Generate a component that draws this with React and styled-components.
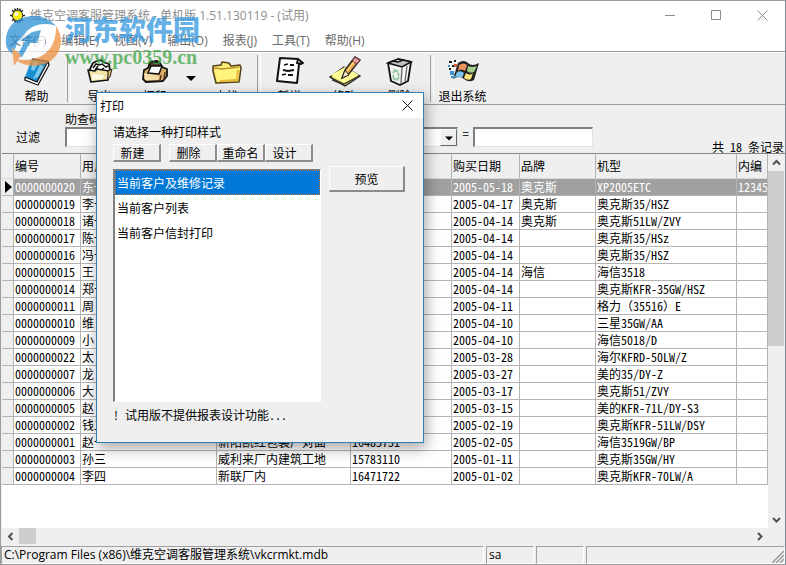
import React from 'react'
import styled, { createGlobalStyle } from 'styled-components'

const GlobalStyle = createGlobalStyle`
    * {
        box-sizing: border-box;
    }
    body {
        margin: 0;
        background: #efefef;
        font-family: "Noto Sans CJK SC", sans-serif;
        font-size: 12px;
        line-height: 16px;
        color: #000;
    }
    button, input, select {
        font: inherit;
        color: inherit;
        border-radius: 0;
        margin: 0;
        padding: 0;
    }
`;

const Window = styled.div`
    position: relative;
    display: flex;
    flex-direction: column;
    min-height: 100vh;
    overflow: hidden;
    background: #efefef;
    border: 1px solid #9c9c9c;
    border-right-color: #7d8b98;
`;

const TitleBar = styled.header`
    display: flex;
    align-items: center;
    height: 28px;
    padding-left: 8px;
    background: #fff;
    color: #8e8e8e;
    font-family: "Open Sans", "Noto Sans CJK SC", sans-serif;
`;

const Title = styled.h1`
    flex: 1;
    margin: 2px 0 0 4px;
    font-size: 12px;
    font-weight: normal;
    white-space: nowrap;
`;

const WindowButton = styled.button`
    display: flex;
    align-items: center;
    justify-content: center;
    width: 46px;
    height: 28px;
    border: 0;
    background: none;
`;

const MenuBar = styled.nav`
    display: flex;
    gap: 15px;
    height: 22px;
    padding: 4px 8px 0;
    background: #fff;
    font-family: "Open Sans", "Noto Sans CJK SC", sans-serif;
`;

const MenuLink = styled.a`
    color: #6a6a6a;
    text-decoration: none;
    white-space: nowrap;
`;

const Toolbar = styled.div`
    display: flex;
    height: 54px;
    padding-left: 8px;
    border-top: 1px solid #9a9a9a;
    border-bottom: 1px solid #9a9a9a;
    box-shadow: inset 0 1px #fff;
`;

const ToolButton = styled.button`
    display: flex;
    flex-direction: column;
    align-items: center;
    width: 55px;
    padding-top: 4px;
    border: 0;
    background: none;
    white-space: nowrap;

    svg {
        flex: none;
    }
`;

const ArrowButton = styled.button`
    width: 17px;
    border: 0;
    background: none;
`;

const Separator = styled.div`
    width: 8px;
    padding: 3px 0 2px 3px;

    &::before {
        content: "";
        display: block;
        width: 2px;
        height: 100%;
        border-left: 1px solid #a0a0a0;
        border-right: 1px solid #fff;
    }
`;

const FilterBar = styled.form`
    display: flex;
    align-items: flex-end;
    height: 48px;
    padding: 0 1px 6px 15px;
`;

const FilterTitle = styled.div`
    width: 49px;
    line-height: 20px;
`;

const Field = styled.div`
    display: flex;
    flex-direction: column;
    width: 140px;
    margin-right: 110px;
`;

const TextInput = styled.input`
    width: ${({ $width }) => $width};
    height: 20px;
    padding: 0 3px;
    background: #fff;
    border: 1px solid #e3e3e3;
    border-top: 2px solid #808080;
    border-left: 2px solid #808080;
    outline: 0;
`;

const Combo = styled.div`
    display: flex;
    align-items: stretch;
    width: 143px;
    height: 20px;
    background: #fff;
    border: 1px solid #e3e3e3;
    border-top: 2px solid #808080;
    border-left: 2px solid #808080;
`;

const Select = styled.select`
    flex: 1;
    appearance: none;
    border: 0;
    background: none;
    outline: 0;
`;

const ComboArrow = styled.span`
    display: flex;
    align-items: center;
    justify-content: center;
    width: 17px;
    background: #efefef;
    border: 1px solid #fff;
    border-right-color: #696969;
    border-bottom-color: #696969;
`;

const Equals = styled.span`
    width: 15px;
    line-height: 28px;
    text-align: center;
`;

const Count = styled.output`
    margin: 0 0 -8px auto;
    white-space: nowrap;
    font-feature-settings: "hwid";
`;

const GridArea = styled.section`
    flex: 1;
    display: grid;
    grid-template-columns: minmax(0, 1fr) 17px;
    grid-template-rows: minmax(374px, 1fr) 16px;
    margin-left: 1px;
    border-top: 1px solid #868686;
`;

const TableBox = styled.div`
    background: #fff;
    overflow: hidden;
`;

const Table = styled.table`
    width: 100%;
    table-layout: fixed;
    border-collapse: separate;
    border-spacing: 0;
    font-feature-settings: "hwid";
`;

const Head = styled.th`
    height: 25px;
    padding: 0 0 0 1px;
    background: #efefef;
    border-right: 1px solid #b4b4b4;
    border-bottom: 1px solid #d8d8d8;
    font-weight: normal;
    text-align: left;
    white-space: nowrap;
    overflow: hidden;
`;

const Cell = styled.td`
    height: 17px;
    padding: 0 0 0 1px;
    background: ${({ $selected }) => ($selected ? "#a0a0a0" : "#fff")};
    color: ${({ $selected }) => ($selected ? "#fff" : "#000")};
    border-right: 1px solid #b4b4b4;
    border-bottom: 1px solid #b4b4b4;
    line-height: 16px;
    white-space: nowrap;
    overflow: hidden;
`;

// brackets that keep their full width inside the half-width table text
const Wide = styled.span`
    font-feature-settings: normal;
`;

const Marker = styled(Cell)`
    padding: 0 0 0 3px;
    background: #efefef;

    svg {
        display: block;
    }
`;

const VScroll = styled.div`
    grid-row: span 2;
    display: flex;
    flex-direction: column;
    margin-right: 1px;
`;

const HScroll = styled.div`
    display: flex;
`;

const ScrollButton = styled.button`
    display: flex;
    align-items: center;
    justify-content: center;
    width: ${({ $across }) => ($across ? "17px" : "100%")};
    height: ${({ $across }) => ($across ? "16px" : "17px")};
    border: 0;
    background: #efefef;
`;

const Thumb = styled.div`
    width: ${({ $across }) => ($across ? "17px" : "auto")};
    height: ${({ $across }) => ($across ? "16px" : "175px")};
    background: #cdcdcd;
`;

const Track = styled.div`
    flex: 1;
`;

const StatusBar = styled.footer`
    display: flex;
    gap: 2px;
    height: 20px;
    padding-top: 2px;
    font-family: "Open Sans", "Noto Sans CJK SC", sans-serif;
`;

const StatusPanel = styled.div`
    display: flex;
    justify-content: space-between;
    flex: ${({ $flex }) => $flex};
    min-width: 0;
    height: 18px;
    padding-left: 2px;
    border: 1px solid #fff;
    border-top-color: #a0a0a0;
    border-left-color: #a0a0a0;
    white-space: nowrap;

    svg {
        align-self: flex-end;
    }
`;

// floats over the main window
const Dialog = styled.div`
    position: absolute;
    top: 91px;
    left: 95px;
    width: 328px;
    padding-bottom: 19px;
    background: #efefef;
    border: 1px solid #2c7fb8;
    box-shadow: 2px 5px 14px rgba(0, 0, 0, 0.36);
`;

const DialogTitle = styled.div`
    display: flex;
    align-items: center;
    justify-content: space-between;
    height: 25px;
    padding-left: 3px;
    background: #fff;
`;

const CloseButton = styled.button`
    display: flex;
    align-items: center;
    justify-content: center;
    width: 31px;
    height: 24px;
    border: 0;
    background: none;
`;

const DialogBody = styled.div`
    padding: 6px 16px 0;
`;

const Row = styled.div`
    display: flex;
    margin-top: 4px;
    gap: ${({ $gap }) => $gap};
`;

const Button = styled.button`
    width: ${({ $large }) => ($large ? "76px" : "48px")};
    height: ${({ $large }) => ($large ? "26px" : "18px")};
    margin-right: ${({ $spaced }) => ($spaced ? "8px" : "0")};
    padding: ${({ $large }) => ($large ? "0" : "0 8px 0 0")};
    background: #efefef;
    border: 1px solid #fff;
    border-right: 2px solid #8c8c8c;
    border-bottom: 2px solid #8c8c8c;
    line-height: 14px;
    white-space: nowrap;
`;

const TightButton = styled(Button)`
    padding: 0;
`;

const ListBox = styled.ul`
    width: 208px;
    height: 233px;
    margin: 3px 0 0;
    padding: 0;
    list-style: none;
    background: #fff;
    border: 1px solid #fff;
    border-top-color: #808080;
    border-left: 2px solid #808080;
`;

const ListItem = styled.li`
    height: 25px;
    padding-left: 2px;
    line-height: 25px;
    background: ${({ $selected }) => ($selected ? "#0078d7" : "none")};
    color: ${({ $selected }) => ($selected ? "#fff" : "#000")};
    outline: ${({ $selected }) => ($selected ? "1px dotted #c07030" : "none")};
    outline-offset: -1px;
`;

const Note = styled.p`
    margin: 5px 0 0;
    font-feature-settings: "hwid";
`;

// site mark stamped across the top left corner
const Watermark = styled.div`
    position: absolute;
    top: 12px;
    left: 4px;
    display: flex;
    gap: 4px;
    pointer-events: none;
    opacity: 0.75;
`;

const MarkName = styled.div`
    color: #3298e0;
    font-size: 27px;
    font-weight: 900;
    line-height: 32px;
    white-space: nowrap;
`;

const MarkSite = styled.div`
    color: #3fa648;
    font-family: "Liberation Serif", serif;
    font-size: 20px;
    font-weight: bold;
    line-height: 24px;
`;

const SunIcon = () => (
    <svg width="17" height="17" viewBox="0 0 17 17">
        <path d="M8.5 1v15M1 8.5h15M3.2 3.2l10.6 10.6M13.8 3.2L3.2 13.8M5.6 1.6l5.8 13.8M11.4 1.6L5.6 15.4" stroke="#222" strokeWidth="1.6" />
        <circle cx="8.5" cy="8.5" r="5.2" fill="#f4ee15" stroke="#333" />
        <circle cx="7.4" cy="7" r="2" fill="#fff" />
    </svg>
)

const HelpIcon = () => (
    <svg width="32" height="32" viewBox="0 0 32 32">
        <path d="M12 3l14 2v3L17 28l-1 1L4 24v-3z" fill="#fff" />
        <path d="M17 26L27 6l1 3-10 19z" fill="#fff" />
        <path d="M11 3l15 2L16 26 4 21z" fill="#168ed1" />
        <path d="M12 5l6 1-5 9-3-1zM19 9l4 1-6 11-5 2z" fill="#a4dcf7" opacity=".75" />
        <path d="M4 21l12 5L27 5M4 21v3l13 5L28 9l-1-4-16-2" fill="none" stroke="#111" strokeWidth="1.3" />
        <path d="M11 3L4 21" stroke="#7fb5cf" />
        <path d="M5 23l12 5" stroke="#fff" />
    </svg>
)

const ExportIcon = () => (
    <svg width="32" height="32" viewBox="0 0 32 32">
        <path d="M6 13l3-6 4-2 4-1 2 2 6 2 1 7-3 9H7z" fill="#fff" stroke="#111" strokeWidth="1.8" strokeLinejoin="round" />
        <path d="M9 12l3-4 3 1 3-1 4 3 2-1M11 14l3-4M17 14l3-2" fill="none" stroke="#111" strokeWidth="1.5" />
        <path d="M4 14l7 1 2-2 12 2-1 9-17 2z" fill="#f3e2a6" stroke="#111" strokeWidth="1.6" strokeLinejoin="round" />
        <path d="M8 18l12 1-1 4-11 1z" fill="#fffbe1" />
        <path d="M24 15l4-2-2 8-2 2z" fill="#e4bd62" stroke="#222" />
    </svg>
)

const PrintIcon = () => (
    <svg width="32" height="32" viewBox="0 0 32 32">
        <path d="M9 12l2-6 7-1 3 2 2 4 5 2v7l-4 5-17 1-3-3 1-9z" fill="#dcad68" stroke="#111" strokeWidth="1.8" strokeLinejoin="round" />
        <path d="M11 7l7-1 3 4-10 2z" fill="#5b422e" stroke="#111" />
        <path d="M5 17l6 1 9 2-1 4H6z" fill="#f5dda7" />
        <path d="M12 10h11l-3 8-11-1z" fill="#fff" stroke="#111" strokeWidth="1.5" />
        <path d="M22 19l-1 6M26 16l-1 7" fill="none" stroke="#4c3218" strokeWidth="1.4" />
    </svg>
)

const FindIcon = () => (
    <svg width="32" height="32" viewBox="0 0 32 32">
        <path d="M2 10l8-1 1-3 7 1 2 3 9-1 1 3-2 14-23 1L2 15z" fill="#ffed79" stroke="#55451a" strokeWidth="1.6" strokeLinejoin="round" />
        <path d="M4 14l23-1-2 11-18 1z" fill="#fff47e" />
        <path d="M3 13l2-1 6 1 17-2" fill="none" stroke="#ba922d" strokeWidth="1.3" />
        <path d="M27 14l-1 10-17 1" fill="none" stroke="#e8ba38" strokeWidth="2" />
    </svg>
)

const NewIcon = () => (
    <svg width="32" height="32" viewBox="0 0 32 32">
        <path d="M6 2l18 1 5 4-4 1-2 19-20-2z" fill="#fff" stroke="#111" strokeWidth="2" strokeLinejoin="round" />
        <path d="M24 3l-1 4 5 1M10 9l4-1M16 9h4M9 14l5 1 6-1M8 19l4-1M14 19h5" fill="none" stroke="#111" strokeWidth="1.8" />
    </svg>
)

const EditIcon = () => (
    <svg width="34" height="32" viewBox="0 0 34 32">
        <path d="M2 21l14-10 16 9-15 10z" fill="#e9e15d" stroke="#222" strokeWidth="1.4" />
        <path d="M3 19l14-8 14 8-15 8z" fill="#ffff9a" />
        <path d="M3 22l13 6 15-8M4 24l12 5" fill="none" stroke="#333" strokeWidth="1.2" />
        <path d="M14 22l3-8L27 1l5 3-12 15z" fill="#efab4d" stroke="#222" strokeWidth="1.4" />
        <path d="M27 1l5 3-3 4-5-3z" fill="#e99b9f" stroke="#5e2b2b" />
        <path d="M17 14l4 5-7 3z" fill="#ffeabf" stroke="#222" />
        <path d="M19 15l7-9" stroke="#fff0a5" />
    </svg>
)

const TrashIcon = () => (
    <svg width="32" height="32" viewBox="0 0 32 32">
        <path d="M4 7l10-4 13 3-3 19-8 4-9-4z" fill="#fafafa" stroke="#111" strokeWidth="1.8" strokeLinejoin="round" />
        <path d="M4 7l5-2 5 1 5-2 8 2-9 5z" fill="#bfc2be" stroke="#111" strokeWidth="1.6" />
        <path d="M7 11l10 2 1-1-1 15-9-3z" fill="#e9f1e9" />
        <path d="M18 12l-1 16M23 10l-2 15" stroke="#666" strokeWidth="1.3" />
        <path d="M9 17l2-3 3 2M9 19l1 4 3 1 2-3M14 17l1 3" fill="none" stroke="#8cc099" strokeWidth="1.6" />
    </svg>
)

const ExitIcon = () => (
    <svg width="34" height="32" viewBox="0 0 34 32">
        <path d="M12 7q6-4 10 0t11 0l-5 17q-5 3-10-1t-11 0z" fill="#222" />
        <path d="M13 9q5-3 8 0l-2 6q-4-3-7 0z" fill="#e9935f" />
        <path d="M22 10q4 2 9 0l-3 6q-4 2-7-1z" fill="#a3d188" />
        <path d="M11 16q4-2 7 1l-2 5q-3-2-7-1z" fill="#7cc4ee" />
        <path d="M20 17q4 3 7 0l-2 6q-3 2-7-1z" fill="#f9e475" />
        <path d="M3 5h3v2H3zM8 4h2v2H8zM6 9h3v2H6zM3 12h2v2H3z" fill="#222" />
        <path d="M8 8h3v3H8z" fill="#d85f40" />
        <path d="M4 15h4v4H4zM2 9h2v2H2zM5 20h4v2H5z" fill="#3b92cf" />
    </svg>
)

const DownArrow = ({ size }) => (
    <svg width={size} height={size} viewBox="0 0 10 10">
        <path d="M0 3h10L5 8z" />
    </svg>
)

const Cross = ({ color }) => (
    <svg width="11" height="11" viewBox="0 0 11 11">
        <path d="M.5.5l10 10M10.5.5l-10 10" stroke={color} />
    </svg>
)

const Chevron = ({ d }) => (
    <svg width="9" height="9" viewBox="0 0 9 9">
        <path d={d} fill="none" stroke="#505050" strokeWidth="2" />
    </svg>
)

const MarkLogo = () => (
    <svg width="56" height="54" viewBox="0 0 56 54">
        <path d="M1 32C-1 12 14 2 31 3c9 1 16 5 20 10-9-4-18-2-24 4l-7 10-7 1-5 13C4 39 2 36 1 32z" fill="#2d91d4" />
        <path d="M14 28l8-10c7-7 18-9 28-4l-8 3-2 14 7 1C41 43 25 50 12 43l7-14z" fill="#fff" />
        <path d="M27 19l9-2-4 13h-7L17 44l-5-1 8-15h-5z" fill="#2d91d4" />
        <path d="M51 13c8 11 6 25-3 33-10 9-28 9-39 0 19 4 34-3 39-16 3-7 3-12 3-17z" fill="#ee9140" />
        <path d="M7 35l9 7-7 11z" fill="#ee9140" />
    </svg>
)

const menus = ["文件(F)", "编辑(E)", "视图(V)", "输出(O)", "报表(J)", "工具(T)", "帮助(H)"];

const columns = [
    { name: "编号", width: 67 },
    { name: "用户名称", width: 136 },
    { name: "地址", width: 134 },
    { name: "电话", width: 101 },
    { name: "购买日期", width: 68 },
    { name: "品牌", width: 76 },
    { name: "机型", width: 141 },
    { name: "内编" },
];

const records = [
    ["0000000020", "东一", "", "", "2005-05-18", "奥克斯", "XP2005ETC", "12345"],
    ["0000000019", "李一", "", "", "2005-04-17", "奥克斯", "奥克斯35/HSZ", ""],
    ["0000000018", "诸一", "", "", "2005-04-14", "奥克斯", "奥克斯51LW/ZVY", ""],
    ["0000000017", "陈一", "", "", "2005-04-14", "", "奥克斯35/HSz", ""],
    ["0000000016", "冯一", "", "", "2005-04-14", "", "奥克斯35/HSZ", ""],
    ["0000000015", "王", "", "", "2005-04-14", "海信", "海信3518", ""],
    ["0000000014", "郑一", "", "", "2005-04-14", "", "奥克斯KFR-35GW/HSZ", ""],
    ["0000000011", "周", "", "", "2005-04-11", "", <>格力<Wide>（</Wide>35516<Wide>）</Wide>E</>, ""],
    ["0000000010", "维", "", "", "2005-04-10", "", "三星35GW/AA", ""],
    ["0000000009", "小", "", "", "2005-04-10", "", "海信5018/D", ""],
    ["0000000022", "太", "", "", "2005-03-28", "", "海尔KFRD-50LW/Z", ""],
    ["0000000007", "龙", "", "", "2005-03-27", "", "美的35/DY-Z", ""],
    ["0000000006", "大", "", "", "2005-03-17", "", "奥克斯51/ZVY", ""],
    ["0000000005", "赵", "", "", "2005-03-15", "", "美的KFR-71L/DY-S3", ""],
    ["0000000002", "钱二", "", "", "2005-02-19", "", "奥克斯KFR-51LW/DSY", ""],
    ["0000000001", "赵一", "新阳凯红包装厂对面", "16485751", "2005-02-05", "", "海信3519GW/BP", ""],
    ["0000000003", "孙三", "威利来厂内建筑工地", "15783110", "2005-01-11", "", "奥克斯35GW/HY", ""],
    ["0000000004", "李四", "新联厂内", "16471722", "2005-01-02", "", "奥克斯KFR-70LW/A", ""],
];

const styleNames = ["当前客户及维修记录", "当前客户列表", "当前客户信封打印"];

const PrintDialog = () => (
    <Dialog role="dialog" aria-label="打印">
        <DialogTitle>
            打印
            <CloseButton aria-label="关闭"><Cross color="#111" /></CloseButton>
        </DialogTitle>
        <DialogBody>
            <div>请选择一种打印样式</div>
            <Row $gap="0">
                <Button $spaced>新建</Button>
                <Button>删除</Button>
                <TightButton>重命名</TightButton>
                <Button>设计</Button>
            </Row>
            <Row $gap="8px">
                <ListBox>
                    {styleNames.map((name, i) => (
                        <ListItem key={name} $selected={i === 0}>{name}</ListItem>
                    ))}
                </ListBox>
                <Button $large>预览</Button>
            </Row>
            <Note>! 试用版不提供报表设计功能...</Note>
        </DialogBody>
    </Dialog>
)

const App = () => {
    return (
        <Window>
            <GlobalStyle />
            <TitleBar>
                <SunIcon />
                <Title>维克空调客服管理系统 - 单机版 1.51.130119 - (试用)</Title>
                <WindowButton aria-label="最小化">
                    <svg width="10" height="10"><path d="M0 5.5h10" stroke="#8c8c8c" /></svg>
                </WindowButton>
                <WindowButton aria-label="最大化">
                    <svg width="10" height="10"><path d="M.5.5h9v9h-9z" fill="none" stroke="#8c8c8c" /></svg>
                </WindowButton>
                <WindowButton aria-label="关闭窗口"><Cross color="#8c8c8c" /></WindowButton>
            </TitleBar>
            <MenuBar>
                {menus.map((menu) => (
                    <MenuLink href="#" key={menu}>{menu}</MenuLink>
                ))}
            </MenuBar>
            <Toolbar>
                <ToolButton><HelpIcon />帮助</ToolButton>
                <Separator />
                <ToolButton><ExportIcon />导出</ToolButton>
                <ToolButton><PrintIcon />打印</ToolButton>
                <ArrowButton aria-label="打印选项"><DownArrow size="10" /></ArrowButton>
                <ToolButton><FindIcon />查找</ToolButton>
                <Separator />
                <ToolButton><NewIcon />新增</ToolButton>
                <ToolButton><EditIcon />修改</ToolButton>
                <ToolButton><TrashIcon />删除</ToolButton>
                <Separator />
                <ToolButton><ExitIcon />退出系统</ToolButton>
            </Toolbar>
            <FilterBar>
                <FilterTitle>过滤</FilterTitle>
                <Field>
                    <label htmlFor="code">助查码</label>
                    <TextInput id="code" $width="100%" />
                </Field>
                <Combo>
                    <Select aria-label="字段" />
                    <ComboArrow><DownArrow size="8" /></ComboArrow>
                </Combo>
                <Equals>=</Equals>
                <TextInput aria-label="值" $width="120px" />
                <Count>共 18 条记录</Count>
            </FilterBar>
            <GridArea>
                <TableBox>
                    <Table>
                        <colgroup>
                            <col width="12" />
                            {columns.map((col) => (
                                <col key={col.name} width={col.width} />
                            ))}
                        </colgroup>
                        <thead>
                            <tr>
                                <Head />
                                {columns.map((col) => (
                                    <Head key={col.name}>{col.name}</Head>
                                ))}
                            </tr>
                        </thead>
                        <tbody>
                            {records.map((record, row) => (
                                <tr key={record[0]}>
                                    <Marker>
                                        {row === 0 && <svg width="7" height="12"><path d="M0 0l7 6-7 6z" /></svg>}
                                    </Marker>
                                    {record.map((value, i) => (
                                        <Cell key={columns[i].name} $selected={row === 0}>{value}</Cell>
                                    ))}
                                </tr>
                            ))}
                        </tbody>
                    </Table>
                </TableBox>
                <VScroll>
                    <ScrollButton aria-label="向上"><Chevron d="M1 6.5L4.5 3 8 6.5" /></ScrollButton>
                    <Thumb />
                    <Track />
                    <ScrollButton aria-label="向下"><Chevron d="M1 3l3.5 3.5L8 3" /></ScrollButton>
                    <ScrollButton as="div" $across />
                </VScroll>
                <HScroll>
                    <ScrollButton $across aria-label="向左"><Chevron d="M6.5 1L3 4.5 6.5 8" /></ScrollButton>
                    <Thumb $across />
                    <Track />
                    <ScrollButton $across aria-label="向右"><Chevron d="M3 1l3.5 3.5L3 8" /></ScrollButton>
                </HScroll>
            </GridArea>
            <StatusBar>
                <StatusPanel $flex="484 1 0">C:\Program Files (x86)\维克空调客服管理系统\vkcrmkt.mdb</StatusPanel>
                <StatusPanel $flex="0 0 48px">sa</StatusPanel>
                <StatusPanel $flex="0 0 48px" />
                <StatusPanel $flex="197 1 0">
                    <span />
                    <svg width="12" height="12"><path d="M0 12L12 0M4 12l8-8M8 12l4-4" stroke="#999" strokeWidth="1.5" /></svg>
                </StatusPanel>
            </StatusBar>
            <Watermark>
                <MarkLogo />
                <div>
                    <MarkName>河东软件园</MarkName>
                    <MarkSite>www.pc0359.cn</MarkSite>
                </div>
            </Watermark>
            <PrintDialog />
        </Window>
    )
}

export default App
